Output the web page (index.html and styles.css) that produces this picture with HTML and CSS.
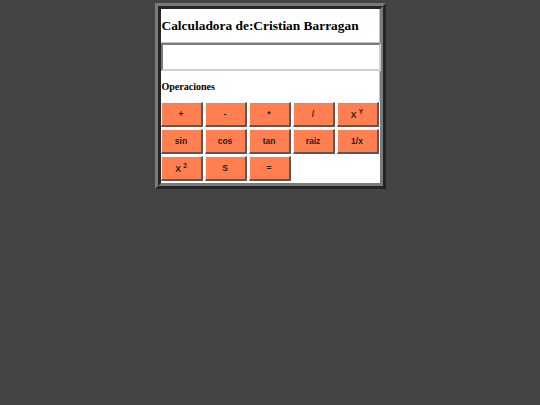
FILE: index.html
```html
<!DOCTYPE html>
<html lang="es">
<head>
    <meta charset="UTF-8">
    <title>Calculadora</title>
    <link rel="stylesheet" href="styles.css">
</head>
<body>
    <div class="calc">
        <div class="title">Calculadora de:Cristian Barragan</div>
        <input type="text" class="display" id="pantalla">
        <div class="ops-label">Operaciones</div>
        <div class="keys">
            <button>+</button>
            <button>-</button>
            <button>*</button>
            <button>/</button>
            <button>X <sup>Y</sup></button>
            <button>sin</button>
            <button>cos</button>
            <button>tan</button>
            <button>raiz</button>
            <button>1/x</button>
            <button>X <sup>2</sup></button>
            <button>S</button>
            <button>=</button>
        </div>
    </div>
</body>
</html>
```

FILE: styles.css
```css
body {
    margin: 0;
    background-color: #444444;
}
.calc {
    width: 219px;
    margin: 3px auto 0;
    border: 6px ridge #7a7a7a;
    background-color: #ffffff;
    padding-bottom: 2px;
}
.title {
    height: 34px;
    display: flex;
    align-items: center;
    padding-left: 1px;
    border-right: 1px solid #c4c4c4;
    border-bottom: 1px solid #c4c4c4;
    box-sizing: border-box;
    font-family: "Liberation Serif", serif;
    font-weight: bold;
    font-size: 13.4px;
    color: #000;
}
.display {
    display: block;
    width: 220px;
    height: 28px;
    margin: 0;
    border: 2px inset #d0d0d0;
    box-sizing: border-box;
    background: #fff;
}
.ops-label {
    height: 31px;
    display: flex;
    align-items: center;
    padding-left: 1px;
    border-right: 1px solid #c4c4c4;
    box-sizing: border-box;
    font-family: "Liberation Serif", serif;
    font-weight: bold;
    font-size: 10px;
}
.keys {
    display: grid;
    grid-template-columns: repeat(5, 42px);
    grid-auto-rows: 25px;
    gap: 2px;
}
.keys button {
    margin: 0;
    padding: 0;
    background-color: #ff7f50;
    border-style: solid;
    border-width: 1px 2px 2px 1px;
    border-color: #f4f4f4 #585858 #585858 #f4f4f4;
    font-family: "Liberation Sans", Arial, sans-serif;
    font-weight: bold;
    font-size: 8.5px;
    color: #222;
}
.keys sup {
    font-size: 6.5px;
}
```
